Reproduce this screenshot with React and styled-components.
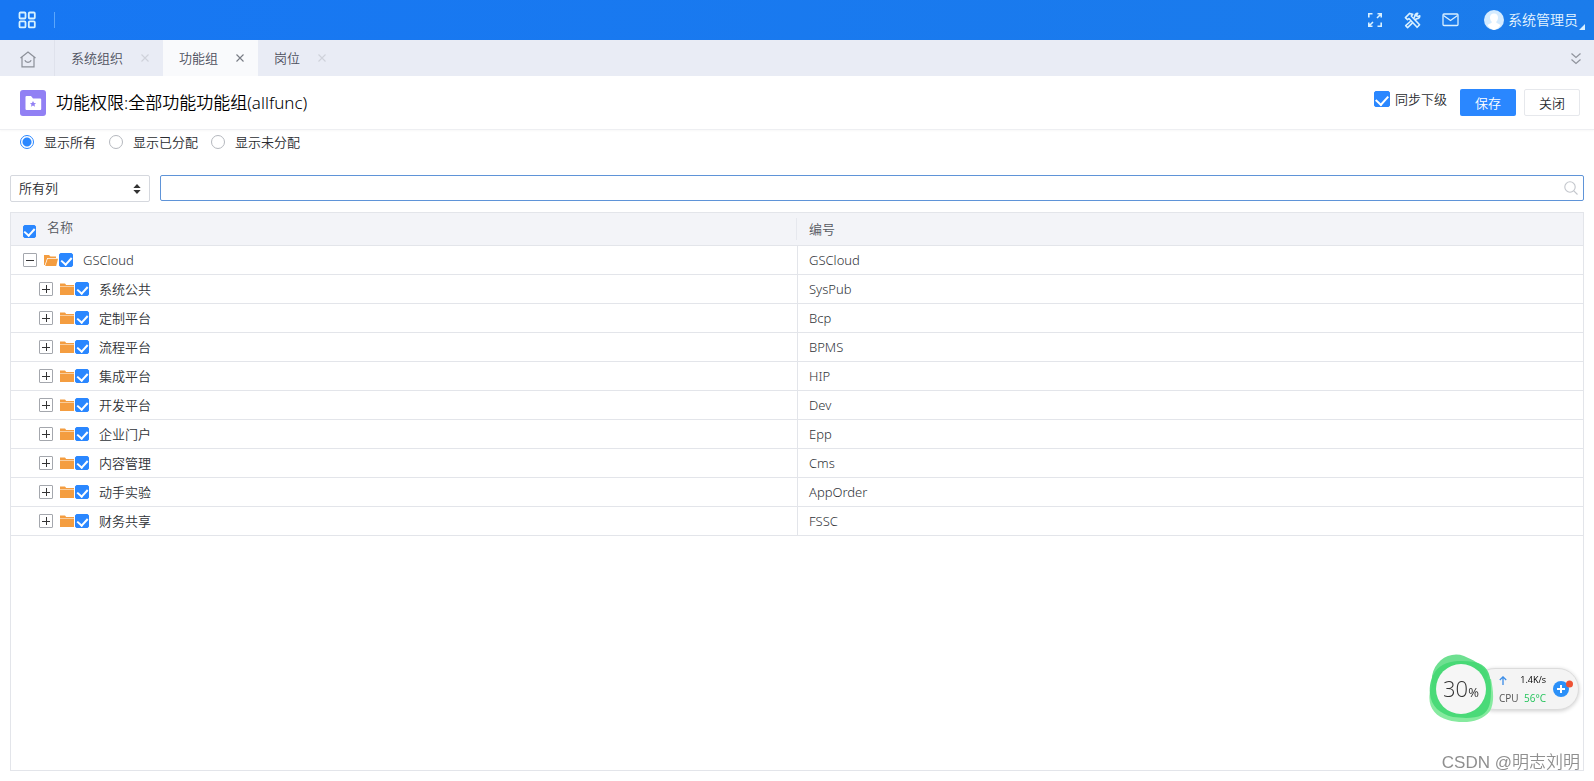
import React, {useState} from 'react';
import styled, {createGlobalStyle, css} from 'styled-components';

const Colors = {
    bar: '#1777f3',
    barEnd: '#1b7ceb',
    primary: '#2a87ff',
    tabs: '#e9ecf5',
    tabActive: '#f9fafc',
    line: '#e3e5ea',
    font: '#2a2c30',
    cell: '#303338',
    folder: '#f49d40',
    green: '#25c45c',
};

const tabs = [
    {label: '系统组织'},
    {label: '功能组', active: true},
    {label: '岗位'},
];

const filters = ['显示所有', '显示已分配', '显示未分配'];

const rows = [
    {name: 'GSCloud', code: 'GSCloud', level: 0, open: true},
    {name: '系统公共', code: 'SysPub', level: 1},
    {name: '定制平台', code: 'Bcp', level: 1},
    {name: '流程平台', code: 'BPMS', level: 1},
    {name: '集成平台', code: 'HIP', level: 1},
    {name: '开发平台', code: 'Dev', level: 1},
    {name: '企业门户', code: 'Epp', level: 1},
    {name: '内容管理', code: 'Cms', level: 1},
    {name: '动手实验', code: 'AppOrder', level: 1},
    {name: '财务共享', code: 'FSSC', level: 1},
];

const GridIcon = () => (
    <svg width="18" height="18" viewBox="0 0 18 18" fill="none" stroke="#d9f3ff" strokeWidth="1.8">
        <rect x="1.5" y="1.5" width="6" height="6" rx="1" />
        <rect x="10.8" y="1.5" width="6" height="6" rx="1" />
        <rect x="1.5" y="10.4" width="6" height="6" rx="1" />
        <rect x="10.8" y="10.4" width="6" height="6" rx="1" />
    </svg>
);

const ExpandIcon = () => (
    <svg width="16" height="16" viewBox="0 0 16 16" fill="none" stroke="#d9f0ff" strokeWidth="1.6">
        <path d="M1.8 5.5V1.8h3.7M10.5 1.8h3.7v3.7M14.2 10.5v3.7h-3.7M5.5 14.2H1.8v-3.7M13.8 2.2L10 6M2.2 13.8L6 10" />
    </svg>
);

const ToolsIcon = () => (
    <svg width="17" height="17" viewBox="0 0 18 18" fill="none" stroke="#d9f0ff" strokeWidth="1.7" strokeLinejoin="round">
        <path d="M1.5 6L6 1.5l3.2 1-1.5 1.7 8.8 9.3-2.6 2.7-8.7-9.3-1.500 1.300z" />
        <path d="M10.5 6.5l1-2c-.2-1.700 1-3 3-3L13 3.800 14.500 5l2.200-1c.2 2-1.300 3.300-3.200 3.200l-2 1M7 9.800l-5.200 4.700 2 2L9 11.600" />
    </svg>
);

const MailIcon = () => (
    <svg width="17" height="14" viewBox="0 0 17 14" fill="none" stroke="#d9f0ff" strokeWidth="1.3">
        <rect x="1" y="1" width="15" height="11.5" rx="1" />
        <path d="M1.5 2.5l7 5 7-5" />
    </svg>
);

const Avatar = () => (
    <svg width="20" height="20" viewBox="0 0 20 20">
        <circle cx="10" cy="10" r="10" fill="#d4ebff" />
        <path d="M10 3.5c2.8 0 4.2 2 4 4.5-.2 2-1 3.2-1.9 4 .3 1.5 3 1.8 4.4 3A10 10 0 0 1 10 20a10 10 0 0 1-6.500-5c1.400-1.200 4.100-1.500 4.400-3C7 11.200 6.200 10 6 8c-.2-2.500 1.200-4.500 4-4.500z" fill="#fff" />
    </svg>
);

const HomeIcon = () => (
    <svg width="16" height="17" viewBox="0 0 16 17" fill="none" stroke="#8b8f98" strokeWidth="1.2">
        <path d="M.5 7L8 1l7.5 6M2 6v9.8h12V6M4.8 9.2c1.2 2.800 5.200 2.800 6.400 0" />
    </svg>
);

const CloseIcon = () => (
    <svg width="12" height="12" viewBox="0 0 12 12" fill="none" stroke="currentColor" strokeWidth="1.1">
        <path d="M2.5 2.5l7 7M9.5 2.5l-7 7" />
    </svg>
);

const ChevronsIcon = () => (
    <svg width="12" height="13" viewBox="0 0 12 13" fill="none" stroke="#8f939c" strokeWidth="1.2">
        <path d="M1.5 1.5l4.5 4 4.500-4M1.500 7.500l4.500 4 4.500-4" />
    </svg>
);

const TitleIcon = () => (
    <svg width="26" height="26" viewBox="0 0 26 26">
        <rect width="26" height="26" rx="3" fill="#9180f4" />
        <path d="M5.5 7q0-1 1-1H11l2 2.5h7.200q1 0 1 1V19q0 1-1 1H6.500q-1 0-1-1z" fill="#fff" />
        <path d="M13 11l1 2 2.1.2-1.600 1.400.5 2.100-2-1.100-2 1.100.5-2.100-1.600-1.400 2.100-.2z" fill="#9180f4" />
    </svg>
);

const Folder = ({open}) => (
    <svg width="14" height="14" viewBox="0 0 14 14" fill={Colors.folder}>
        {open
            ? <path d="M0 12V2h5l1.5 1.5H12V5H3.2L.8 12zM3.7 5.8H14L12.2 13H1.2z" />
            : <path d="M0 1.5h5L6.2 3H14v1.2H0zM0 4.8h14V13H0z" />}
    </svg>
);

const SearchIcon = () => (
    <svg width="14" height="14" viewBox="0 0 14 14" fill="none" stroke="#c3c6cc" strokeWidth="1.1">
        <circle cx="6" cy="6" r="5.2" />
        <path d="M9.8 9.8l3.7 3.7" />
    </svg>
);

const Blob = () => (
    <svg width="66" height="70" viewBox="0 0 66 70">
        <path d="M4 22C7 6 22-3 36 2c8 4 20 8 24 19l-8 40C30 70 6 60 3 45z" fill="#6ee091" />
        <path d="M3 34C-2 50 5 62 20 66c14 4 33 3 42-9 5-9 3-22 1-32z" fill="#86ea9f" />
        <path d="M7 18C15 6 32 6 46 8c12 2 17 10 17 26 0 14-1 22-9 27-8 4-20 3-29 2C12 60 3 52 2 40 1 32 3 24 7 18z" fill="#44d873" opacity=".9" />
        <circle cx="33" cy="35" r="25" fill="#f6f6f6" />
    </svg>
);

const PlusBadge = () => (
    <svg width="20" height="18" viewBox="0 0 20 18">
        <circle cx="8" cy="9" r="8" fill="#2b90f8" />
        <path d="M8 5v8M4 9h8" stroke="#fff" strokeWidth="2" />
        <circle cx="16.5" cy="4" r="3.5" fill="#ee5234" />
    </svg>
);

const App = () => {
    const [filter, setFilter] = useState(0);

    return (
        <Page>
            <GlobalStyle />
            <TopBar>
                <TopGroup>
                    <IconButton aria-label="应用"><GridIcon /></IconButton>
                    <TopDivider />
                </TopGroup>
                <TopActions>
                    <IconButton aria-label="全屏"><ExpandIcon /></IconButton>
                    <IconButton aria-label="工具"><ToolsIcon /></IconButton>
                    <IconButton aria-label="消息"><MailIcon /></IconButton>
                    <User><Avatar />系统管理员<Corner /></User>
                </TopActions>
            </TopBar>

            <TabBar>
                <HomeTab aria-label="首页"><HomeIcon /></HomeTab>
                {tabs.map(tab => (
                    <Tab key={tab.label} $active={tab.active}>
                        <TabLabel>{tab.label}</TabLabel>
                        <TabClose $active={tab.active} aria-label="关闭标签"><CloseIcon /></TabClose>
                    </Tab>
                ))}
                <MoreTabs aria-label="更多"><ChevronsIcon /></MoreTabs>
            </TabBar>

            <Header>
                <TitleIcon />
                <Title>功能权限:全部功能功能组(allfunc)</Title>
                <SyncLabel><Checkbox $size={16} defaultChecked />同步下级</SyncLabel>
                <PrimaryButton>保存</PrimaryButton>
                <SecondaryButton>关闭</SecondaryButton>
            </Header>

            <Filters>
                {filters.map((label, i) => (
                    <RadioLabel key={label}>
                        <Radio name="filter" checked={filter === i} onChange={() => setFilter(i)} />
                        {label}
                    </RadioLabel>
                ))}
            </Filters>

            <Content>
                <SearchRow>
                    <SelectWrapper>
                        <Select aria-label="查询列"><option>所有列</option></Select>
                        <SelectArrows viewBox="0 0 8 11">
                            <path d="M0 4.5L4 0l4 4.5zM0 6.5L4 11l4-4.5z" fill="#333" />
                        </SelectArrows>
                    </SelectWrapper>
                    <SearchBox>
                        <SearchInput type="text" aria-label="查询" />
                        <SearchIcon />
                    </SearchBox>
                </SearchRow>

                <TableWrapper>
                    <Table>
                        <thead>
                            <tr>
                                <Th>
                                    <HeadCell>
                                        <Checkbox $size={13} defaultChecked aria-label="全选" />
                                        <HeadName>名称</HeadName>
                                    </HeadCell>
                                </Th>
                                <Th>编号</Th>
                            </tr>
                        </thead>
                        <tbody>
                            {rows.map(row => (
                                <tr key={row.code}>
                                    <Td>
                                        <TreeCell $level={row.level}>
                                            <Toggle $open={row.open} aria-label={row.open ? '收起' : '展开'} />
                                            <Folder open={row.open} />
                                            <Checkbox $size={14} defaultChecked aria-label={row.name} />
                                            <NodeName>{row.name}</NodeName>
                                        </TreeCell>
                                    </Td>
                                    <Td>{row.code}</Td>
                                </tr>
                            ))}
                        </tbody>
                    </Table>
                </TableWrapper>
            </Content>

            <Monitor>
                <Gauge>
                    <Blob />
                    <GaugeText>30<small>%</small></GaugeText>
                </Gauge>
                <MonitorPill>
                    <Stats>
                        <Stat $dark>
                            <svg width="8" height="9" viewBox="0 0 8 9" fill="none" stroke="#3b8de8" strokeWidth="1.3">
                                <path d="M4 9V1M.8 4L4 .9 7.2 4" />
                            </svg>
                            <span>1.4K/s</span>
                        </Stat>
                        <Stat>CPU <Temp>56°C</Temp></Stat>
                    </Stats>
                    <PlusBadge />
                </MonitorPill>
            </Monitor>
            <Watermark>CSDN @明志刘明</Watermark>
        </Page>
    );
};

const GlobalStyle = createGlobalStyle`
    * {
        box-sizing: border-box;
    }
    body {
        margin: 0;
        background: #fff;
    }
    body, button, input, select {
        font-family: "Noto Sans", "Noto Sans CJK SC", sans-serif;
        font-size: 13px;
        font-weight: 350;
        line-height: 18px;
        color: ${Colors.font};
    }
    svg {
        display: block;
        flex: none;
    }
    button {
        border: 0;
        padding: 0;
        background: none;
        cursor: pointer;
    }
`;

const Page = styled.div`
    display: flex;
    flex-direction: column;
    min-height: 100vh;
`;

const TopBar = styled.header`
    display: flex;
    align-items: center;
    justify-content: space-between;
    height: 40px;
    padding: 0 9px 0 18px;
    background: linear-gradient(90deg, ${Colors.bar}, ${Colors.barEnd});
`;

const TopGroup = styled.div`
    display: flex;
    align-items: center;
    gap: 18px;
`;

const TopDivider = styled.span`
    width: 1px;
    height: 16px;
    background: #5ba6fb;
`;

const TopActions = styled.div`
    display: flex;
    align-items: center;
    gap: 21px;
`;

const IconButton = styled.button`
    display: flex;
`;

const User = styled.button`
    position: relative;
    display: flex;
    align-items: center;
    gap: 4px;
    margin-left: 4px;
    padding-right: 7px;
    font-size: 14px;
    color: #e6f5ff;
`;

const Corner = styled.span`
    position: absolute;
    right: 0;
    bottom: 0;
    border: 3px solid;
    border-color: transparent #d9f0ff #d9f0ff transparent;
`;

const TabBar = styled.nav`
    display: flex;
    align-items: stretch;
    height: 36px;
    background: ${Colors.tabs};
`;

const HomeTab = styled.button`
    display: flex;
    align-items: center;
    justify-content: center;
    width: 54px;
    padding: 2px 0 0 2px;
`;

const Tab = styled.div`
    display: flex;
    align-items: center;
    gap: 16px;
    padding: 0 12px 0 16px;
    background: ${props => props.$active ? Colors.tabActive : 'transparent'};
    &:nth-child(2) {
        border-left: 1px solid #dfe2ec;
    }
`;

const TabLabel = styled.button`
    color: #4c4f5c;
`;

const TabClose = styled.button`
    color: ${props => props.$active ? '#777b84' : '#cfd2da'};
`;

const MoreTabs = styled.button`
    margin-left: auto;
    padding: 0 12px;
`;

const Header = styled.div`
    display: flex;
    align-items: center;
    height: 54px;
    padding: 0 14px 0 20px;
    border-bottom: 1px solid #eeeff2;
    box-shadow: 0 1px 2px rgba(0, 0, 0, .03);
`;

const Title = styled.h1`
    flex: 1;
    margin: 0 0 0 10px;
    font-size: 17px;
    font-weight: 350;
    line-height: 24px;
    color: #000;
`;

const Checkbox = styled.input.attrs({type: 'checkbox'})`
    appearance: none;
    flex: none;
    width: ${props => props.$size}px;
    height: ${props => props.$size}px;
    margin: 0;
    border: 1px solid ${Colors.primary};
    border-radius: 2px;
    display: flex;
    justify-content: center;
    &:checked {
        background: ${Colors.primary};
    }
    &:checked::before {
        content: '';
        width: ${props => props.$size > 14 ? 6 : 5}px;
        height: ${props => props.$size > 14 ? 10 : 8}px;
        margin-top: ${props => props.$size > 13 ? 1 : 0}px;
        border: solid #fff;
        border-width: 0 2px 2px 0;
        transform: rotate(42deg);
    }
`;

const SyncLabel = styled.label`
    display: flex;
    align-items: center;
    gap: 5px;
    margin: 0 13px 8px 0;
`;

const Button = styled.button`
    width: 56px;
    height: 27px;
    border-radius: 2px;
`;

const PrimaryButton = styled(Button)`
    background: ${Colors.primary};
    color: #fff;
`;

const SecondaryButton = styled(Button)`
    margin-left: 8px;
    border: 1px solid #e6e8ec;
    background: #fff;
`;

const Filters = styled.div`
    display: flex;
    gap: 13px;
    padding: 3px 20px;
`;

const RadioLabel = styled.label`
    display: flex;
    align-items: center;
    gap: 10px;
`;

const Radio = styled.input.attrs({type: 'radio'})`
    appearance: none;
    width: 14px;
    height: 14px;
    margin: 0;
    border: 1px solid #b5b8be;
    border-radius: 50%;
    &:checked {
        border-color: ${Colors.primary};
        background: radial-gradient(circle, ${Colors.primary} 4px, #fff 5px);
    }
`;

const Content = styled.main`
    display: flex;
    flex: 1;
    flex-direction: column;
    gap: 10px;
    padding: 21px 10px 10px;
`;

const SearchRow = styled.div`
    display: flex;
    gap: 10px;
`;

const SelectWrapper = styled.div`
    position: relative;
    width: 140px;
`;

const Select = styled.select`
    appearance: none;
    width: 100%;
    height: 27px;
    padding: 0 8px 2px;
    border: 1px solid #d5d8de;
    border-radius: 2px;
    background: #fff;
`;

const SelectArrows = styled.svg`
    position: absolute;
    top: 9px;
    right: 9px;
    width: 8px;
    height: 10px;
    pointer-events: none;
`;

const SearchBox = styled.div`
    display: flex;
    flex: 1;
    align-items: center;
    height: 26px;
    padding: 0 5px 0 8px;
    border: 1px solid #5f94d8;
    border-radius: 2px;
`;

const SearchInput = styled.input`
    flex: 1;
    border: 0;
    outline: 0;
    background: none;
`;

const TableWrapper = styled.div`
    flex: 1;
    border: 1px solid ${Colors.line};
`;

const Table = styled.table`
    width: 100%;
    table-layout: fixed;
    border-collapse: separate;
    border-spacing: 0;
`;

const cell = css`
    padding: 0 12px;
    border-bottom: 1px solid ${Colors.line};
    text-align: left;
    font-weight: 350;
`;

const Th = styled.th`
    ${cell}
    height: 33px;
    background: #f3f4f8;
    color: #55585f;
`;

const Td = styled.td`
    ${cell}
    height: 29px;
    color: ${Colors.cell};
    & + & {
        border-left: 1px solid ${Colors.line};
        padding-left: 11px;
    }
`;

const HeadCell = styled.div`
    display: flex;
    align-items: flex-end;
    gap: 11px;
    height: 22px;
    margin-right: -12px;
    padding-bottom: 2px;
    border-right: 1px solid #e6e8ee;
`;

const HeadName = styled.span`
    padding-bottom: 2px;
`;

const TreeCell = styled.div`
    display: flex;
    align-items: center;
    padding-left: ${props => props.$level * 16}px;
    & > ${Checkbox} {
        margin-left: 1px;
    }
`;

const Toggle = styled.button`
    width: 14px;
    height: 14px;
    margin-right: 7px;
    border: 1px solid #a4a7ad;
    border-radius: 1px;
    background:
        linear-gradient(#333, #333) center / 8px 1px no-repeat,
        linear-gradient(#333, #333) center / 1px ${props => props.$open ? 0 : 8}px no-repeat;
`;

const NodeName = styled.span`
    margin-left: 10px;
`;

/* floating system monitor */
const Monitor = styled.aside`
    position: fixed;
    right: 15px;
    bottom: 57px;
    display: flex;
    align-items: center;
`;

const Gauge = styled.div`
    position: relative;
    z-index: 1;
    margin-right: -20px;
`;

const GaugeText = styled.span`
    position: absolute;
    inset: 0;
    display: flex;
    align-items: baseline;
    justify-content: center;
    font-family: "Open Sans", sans-serif;
    font-size: 22px;
    font-weight: 300;
    line-height: 68px;
    color: #333;
    small {
        font-size: 13px;
        font-weight: 400;
    }
`;

const MonitorPill = styled.div`
    display: flex;
    align-items: center;
    gap: 7px;
    height: 42px;
    padding: 0 5px 0 24px;
    border: 1px solid #dcdcdc;
    border-radius: 21px;
    background: #f4f4f4;
    box-shadow: 0 1px 4px rgba(0, 0, 0, .2);
`;

const Stats = styled.div`
    width: 47px;
`;

const Stat = styled.div`
    display: flex;
    align-items: center;
    justify-content: space-between;
    font-family: "Open Sans", sans-serif;
    font-size: ${props => props.$dark ? 9 : 10}px;
    font-weight: 400;
    line-height: 18px;
    white-space: nowrap;
    color: ${props => props.$dark ? '#000' : '#555'};
`;

const Temp = styled.span`
    color: ${Colors.green};
`;

const Watermark = styled.div`
    position: fixed;
    right: 14px;
    bottom: 7px;
    font-family: "Liberation Sans", "Noto Sans CJK SC", sans-serif;
    font-size: 17px;
    line-height: 22px;
    color: #8f8f8f;
`;

export default App;
